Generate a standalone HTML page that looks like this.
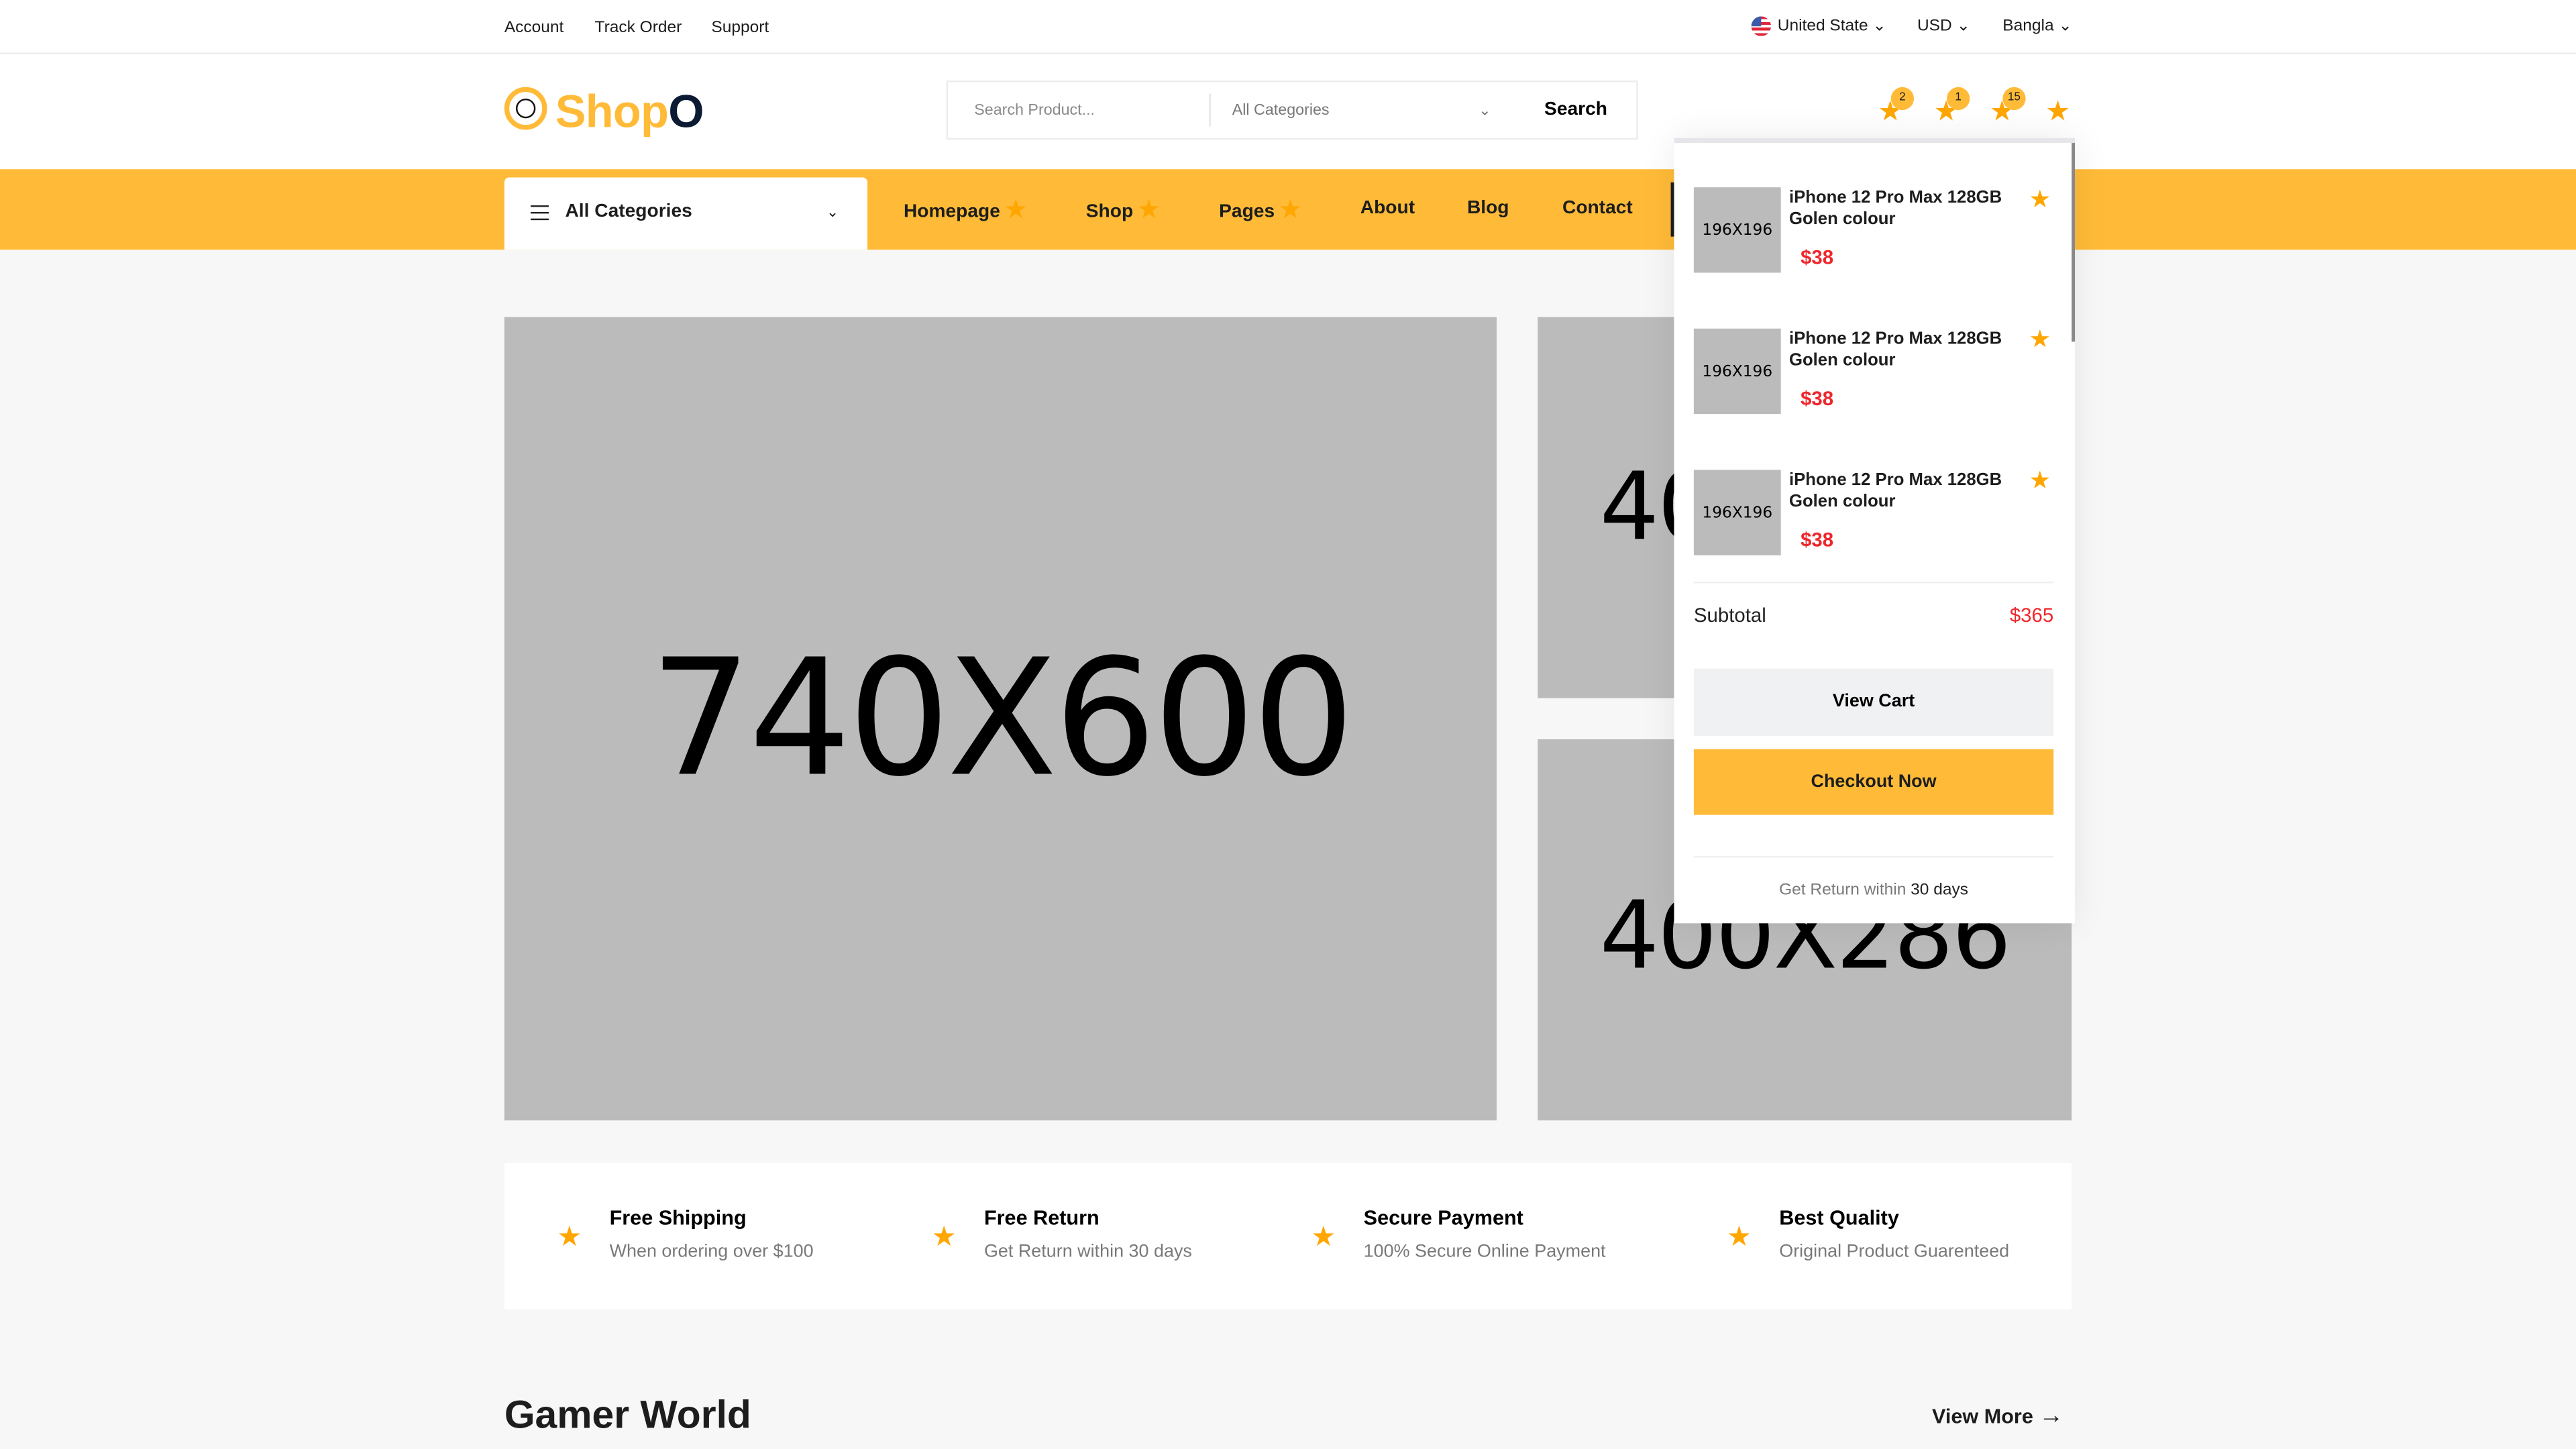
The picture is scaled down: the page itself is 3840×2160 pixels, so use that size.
<!DOCTYPE html>
<html><head><meta charset="utf-8"><style>
html,body{margin:0;padding:0;width:3840px;height:2160px;overflow:hidden;background:#f7f7f7}
#w{position:absolute;left:0;top:0;width:1568px;height:882px;transform:scale(2.44898);transform-origin:0 0;font-family:"Liberation Sans",sans-serif;color:#1d1d1d;background:#f7f7f7}
.a{position:absolute}
.t{position:absolute;line-height:1;transform:translateY(-45%);white-space:nowrap}
.st{color:#ffa600}
.ph{position:absolute;background:#bbb;display:flex;align-items:center;justify-content:center;font-family:"DejaVu Sans",sans-serif;color:#000;overflow:hidden}
.b{font-weight:bold}
</style></head><body><div id="w">
<!-- top bar -->
<div class="a" style="left:0;top:0;width:1568px;height:32px;background:#fff;border-bottom:1px solid #ececec"></div>
<div class="t" style="left:307px;top:17px;font-size:10px">Account</div>
<div class="t" style="left:362px;top:17px;font-size:10px">Track Order</div>
<div class="t" style="left:433px;top:17px;font-size:10px">Support</div>
<div class="a" style="left:1066px;top:10px;width:12px;height:12px;border-radius:50%;background:repeating-linear-gradient(#e0243a 0 1.7px,#fff 1.7px 3.4px);overflow:hidden"><div style="width:6px;height:6px;background:#3b5aa8"></div></div>
<div class="t" style="left:1082px;top:16px;font-size:10px">United State ⌄</div>
<div class="t" style="left:1167px;top:16px;font-size:10px">USD ⌄</div>
<div class="t" style="left:1219px;top:16px;font-size:10px">Bangla ⌄</div>
<!-- header -->
<div class="a" style="left:0;top:33px;width:1568px;height:70px;background:#fff"></div>
<div class="a" style="left:307px;top:53px;width:26px;height:26px;border:3px solid #ffbb38;border-radius:50%;box-sizing:border-box"></div>
<div class="a" style="left:314px;top:60px;width:12px;height:12px;border:1.3px solid #111;border-radius:50%;box-sizing:border-box"></div>
<div class="t b" style="left:338px;top:67px;font-size:28px;color:#ffbb38;letter-spacing:-0.3px">Shop<span style="color:#0c1a33">O</span></div>
<div class="a" style="left:576px;top:49px;width:421px;height:36px;border:1px solid #ececec;box-sizing:border-box;background:#fff"></div>
<div class="t" style="left:593px;top:67px;font-size:9.5px;color:#8a8a8a">Search Product...</div>
<div class="a" style="left:736px;top:57px;width:1px;height:20px;background:#e5e5e5"></div>
<div class="t" style="left:750px;top:67px;font-size:9.5px;color:#777">All Categories</div>
<div class="t" style="left:900px;top:67px;font-size:9px;color:#777">⌄</div>
<div class="t b" style="left:940px;top:67px;font-size:11.5px;color:#000">Search</div>
<div class="t st" style="left:1143px;top:67px;font-size:17px">★</div>
<div class="t st" style="left:1177px;top:67px;font-size:17px">★</div>
<div class="t st" style="left:1211px;top:67px;font-size:17px">★</div>
<div class="t st" style="left:1245px;top:67px;font-size:17px">★</div>
<div class="a" style="left:1151px;top:53px;width:14px;height:14px;border-radius:50%;background:#ffbb38;font-size:7px;text-align:center;line-height:14px">2</div>
<div class="a" style="left:1185px;top:53px;width:14px;height:14px;border-radius:50%;background:#ffbb38;font-size:7px;text-align:center;line-height:14px">1</div>
<div class="a" style="left:1219px;top:53px;width:14px;height:14px;border-radius:50%;background:#ffbb38;font-size:7px;text-align:center;line-height:14px">15</div>
<!-- nav -->
<div class="a" style="left:0;top:103px;width:1568px;height:49px;background:#ffbb38"></div>
<div class="a" style="left:307px;top:108px;width:221px;height:44px;background:#fff;border-radius:3px 3px 0 0"></div>
<div class="a" style="left:323px;top:125px;width:11px;height:1.3px;background:#222;box-shadow:0 4px 0 #222,0 8px 0 #222"></div>
<div class="t b" style="left:344px;top:129px;font-size:11.5px">All Categories</div>
<div class="t" style="left:503px;top:129px;font-size:9px">⌄</div>
<div class="t b" style="left:550px;top:127px;font-size:11.5px">Homepage <span class="st" style="font-size:14px">★</span></div>
<div class="t b" style="left:661px;top:127px;font-size:11.5px">Shop <span class="st" style="font-size:14px">★</span></div>
<div class="t b" style="left:742px;top:127px;font-size:11.5px">Pages <span class="st" style="font-size:14px">★</span></div>
<div class="t b" style="left:828px;top:127px;font-size:11.5px">About</div>
<div class="t b" style="left:893px;top:127px;font-size:11.5px">Blog</div>
<div class="t b" style="left:951px;top:127px;font-size:11.5px">Contact</div>
<div class="a" style="left:1017px;top:111px;width:2px;height:33px;background:#1d1d1d"></div>
<!-- hero -->
<div class="ph" style="left:307px;top:193px;width:604px;height:489px;font-size:98px;letter-spacing:-2px">740X600</div>
<div class="ph" style="left:936px;top:193px;width:325px;height:232px;font-size:57px;letter-spacing:-1px">400X286</div>
<div class="ph" style="left:936px;top:450px;width:325px;height:232px;font-size:57px;letter-spacing:-1px;padding-top:7px;box-sizing:border-box">400X286</div>
<!-- features -->
<div class="a" style="left:307px;top:708px;width:954px;height:89px;background:#fff"></div>
<div class="t st" style="left:339px;top:752px;font-size:17px">★</div>
<div class="t b" style="left:371px;top:741px;font-size:12.5px;color:#000">Free Shipping</div>
<div class="t" style="left:371px;top:762px;font-size:11px;color:#797979">When ordering over $100</div>
<div class="t st" style="left:567px;top:752px;font-size:17px">★</div>
<div class="t b" style="left:599px;top:741px;font-size:12.5px;color:#000">Free Return</div>
<div class="t" style="left:599px;top:762px;font-size:11px;color:#797979">Get Return within 30 days</div>
<div class="t st" style="left:798px;top:752px;font-size:17px">★</div>
<div class="t b" style="left:830px;top:741px;font-size:12.5px;color:#000">Secure Payment</div>
<div class="t" style="left:830px;top:762px;font-size:11px;color:#797979">100% Secure Online Payment</div>
<div class="t st" style="left:1051px;top:752px;font-size:17px">★</div>
<div class="t b" style="left:1083px;top:741px;font-size:12.5px;color:#000">Best Quality</div>
<div class="t" style="left:1083px;top:762px;font-size:11px;color:#797979">Original Product Guarenteed</div>
<div class="t b" style="left:307px;top:861px;font-size:24px;color:#1d1d1d">Gamer World</div>
<div class="t b" style="left:1176px;top:861px;font-size:12.5px;color:#1d1d1d">View More <span style="font-size:15px">→</span></div>
<!-- cart dropdown -->
<div class="a" style="left:1019px;top:84px;width:244px;height:478px;background:#fff;border-top:3px solid #e6e6ea;box-sizing:border-box;box-shadow:0 0 20px rgba(0,0,0,0.08)"></div>
<div class="a" style="left:1261px;top:87px;width:2px;height:121px;background:#888"></div>
<div class="ph" style="left:1031px;top:114px;width:53px;height:52px;font-size:9.5px">196X196</div>
<div class="t b" style="left:1089px;top:126px;font-size:10.5px;line-height:13px">iPhone 12 Pro Max 128GB<br>Golen colour</div>
<div class="t st" style="left:1235px;top:121px;font-size:15px">★</div>
<div class="t b" style="left:1096px;top:156px;font-size:12px;color:#ef262c">$38</div>
<div class="ph" style="left:1031px;top:200px;width:53px;height:52px;font-size:9.5px">196X196</div>
<div class="t b" style="left:1089px;top:212px;font-size:10.5px;line-height:13px">iPhone 12 Pro Max 128GB<br>Golen colour</div>
<div class="t st" style="left:1235px;top:206px;font-size:15px">★</div>
<div class="t b" style="left:1096px;top:242px;font-size:12px;color:#ef262c">$38</div>
<div class="ph" style="left:1031px;top:286px;width:53px;height:52px;font-size:9.5px">196X196</div>
<div class="t b" style="left:1089px;top:298px;font-size:10.5px;line-height:13px">iPhone 12 Pro Max 128GB<br>Golen colour</div>
<div class="t st" style="left:1235px;top:292px;font-size:15px">★</div>
<div class="t b" style="left:1096px;top:328px;font-size:12px;color:#ef262c">$38</div>
<div class="a" style="left:1031px;top:354px;width:219px;height:1px;background:#efefef"></div>
<div class="t" style="left:1031px;top:374px;font-size:12px;color:#222">Subtotal</div>
<div class="t" style="right:318px;top:374px;font-size:12px;color:#ef262c">$365</div>
<div class="a b" style="left:1031px;top:407px;width:219px;height:41px;background:#f0f1f3;font-size:11px;text-align:center;line-height:41px;color:#000">View Cart</div>
<div class="a b" style="left:1031px;top:456px;width:219px;height:40px;background:#ffbb38;font-size:11px;text-align:center;line-height:40px;color:#1d1d1d">Checkout Now</div>
<div class="a" style="left:1031px;top:521px;width:219px;height:1px;background:#efefef"></div>
<div class="t" style="left:1031px;width:219px;text-align:center;top:542px;font-size:10px;color:#797979">Get Return within <span style="color:#222">30 days</span></div>
</div></body></html>
